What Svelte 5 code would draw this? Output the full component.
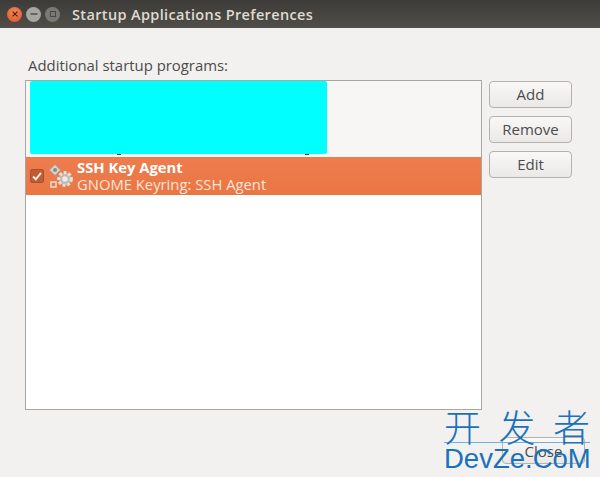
<script>
  let programs = [
    { name: 'SSH Key Agent', desc: 'GNOME Keyring: SSH Agent', checked: true }
  ];
  const actions = ['Add', 'Remove', 'Edit'];
</script>

<div class="window">
  <header class="titlebar">
    <div class="controls">
      <span class="ctl close">
        <svg width="14" height="14" viewBox="0 0 14 14"><path d="M4.6 4.6l4.8 4.8M9.4 4.6l-4.8 4.8" stroke="#5a1e08" stroke-width="1.3" /></svg>
      </span>
      <span class="ctl min">
        <svg width="14" height="14" viewBox="0 0 14 14"><path d="M3.5 7h7" stroke="#4a4844" stroke-width="1.4" /></svg>
      </span>
      <span class="ctl max">
        <svg width="14" height="14" viewBox="0 0 14 14"><rect x="4.5" y="4.5" width="5" height="5" fill="none" stroke="#4a4844" stroke-width="1" /></svg>
      </span>
    </div>
    <span class="title">Startup Applications Preferences</span>
  </header>

  <main class="content">
    <div class="label">Additional startup programs:</div>
    <div class="panel">
      <div class="list">
        <div class="hidden-row">
          <div class="redacted"></div>
          <!-- bits of descenders left under the cyan block -->
          <i class="tail a"></i>
          <i class="tail b"></i>
        </div>
        {#each programs as p}
          <div class="row">
            <span class="check">
              <svg width="12" height="12" viewBox="0 0 12 12"><path d="M2 6.5l2.8 2.8L10 2.8" fill="none" stroke="#fbeee6" stroke-width="2" /></svg>
            </span>
            <svg class="gears" width="28" height="28" viewBox="0 0 28 28">
              <path d="M7 2.5l5.5 5.5-5.5 5.5L1.500 8z" fill="#d9d4cf" stroke="#a8a09b" stroke-width="1" />
              <circle cx="7" cy="8" r="2" fill="#8f8a86" />
              <circle cx="17" cy="17" r="6.3" fill="#bdb8b4" stroke="#e9dfd9" stroke-width="3.2" stroke-dasharray="2.8 1.8" />
              <circle cx="17" cy="17" r="2.8" fill="#f0e9e4" />
              <rect x="3" y="20" width="5" height="5" fill="none" stroke="#e6dfda" stroke-width="1.500" />
            </svg>
            <div class="text">
              <strong>{p.name}</strong>
              <span>{p.desc}</span>
            </div>
          </div>
        {/each}
      </div>
      <div class="actions">
        {#each actions as a}
          <button>{a}</button>
        {/each}
      </div>
    </div>
    <div class="footer">
      <button class="close-btn">Close</button>
    </div>
  </main>

  <div class="watermark">
    <div class="cn"><span>开</span><span>发</span><span>者</span></div>
    <div class="en">DevZe.CoM</div>
  </div>
</div>

<style>
  :global(body) {
    margin: 0;
  }

  .window {
    position: relative;
    width: 600px;
    height: 477px;
    overflow: hidden;
    background: #f2f1f0;
    font-family: "Open Sans", "Noto Sans", sans-serif;
    color: #4c4c4c;
  }

  .titlebar {
    display: flex;
    align-items: center;
    height: 28px;
    padding-left: 7px;
    box-sizing: border-box;
    background: linear-gradient(#3c3b37, #504e49);
  }

  .controls {
    display: flex;
    gap: 4px;
    width: 65px;
  }

  .ctl {
    display: block;
    width: 15px;
    height: 15px;
    border-radius: 50%;
  }

  .ctl svg {
    display: block;
    margin: 0.5px;
  }

  .ctl.close {
    background: radial-gradient(circle at 50% 35%, #f08a5e, #df4f20);
  }

  .ctl.min {
    background: #a8a6a1;
  }

  .ctl.max {
    background: #7b7975;
  }

  .title {
    color: #dfdbd2;
    font-size: 14.5px;
    font-weight: 600;
    letter-spacing: 0.36px;
    white-space: nowrap;
  }

  .content {
    display: flex;
    flex-direction: column;
    height: 449px;
    box-sizing: border-box;
    padding: 27px 15px 13px 25px;
  }

  .label {
    height: 25px;
    margin-left: 3px;
    font-size: 14.9px;
    line-height: 20px;
    white-space: nowrap;
  }

  .panel {
    display: flex;
    gap: 7px;
    height: 331px;
    padding-right: 13px;
  }

  .list {
    flex: 1;
    box-sizing: border-box;
    border: 1px solid #a9a7a3;
    background: #fff;
  }

  .hidden-row {
    position: relative;
    height: 76px;
    padding: 0 4px;
    background: #f7f6f5;
  }

  .redacted {
    width: 297px;
    height: 73px;
    border-radius: 2px;
    background: #00ffff;
  }

  .tail {
    position: absolute;
    top: 73px;
    width: 4px;
    height: 1px;
    background: #2c4a52;
  }

  .tail.a {
    left: 91px;
  }

  .tail.b {
    left: 279px;
  }

  .row {
    display: flex;
    align-items: center;
    height: 38px;
    padding-left: 4px;
    background: linear-gradient(#ee7c4d, #ea7644);
    color: #fff;
  }

  .check {
    display: flex;
    align-items: center;
    justify-content: center;
    box-sizing: border-box;
    width: 14px;
    height: 14px;
    border: 1px solid #a9512d;
    border-radius: 2px;
    background: #c05c34;
  }

  .gears {
    margin-left: 4px;
    margin-right: 1px;
  }

  .text {
    display: flex;
    flex-direction: column;
    font-size: 14.8px;
    line-height: 16.5px;
    white-space: nowrap;
  }

  .text strong {
    font-weight: 700;
  }

  .text span {
    color: #fde4d8;
  }

  .actions {
    display: flex;
    flex-direction: column;
    gap: 8px;
    width: 83px;
    padding-top: 1px;
  }

  button {
    box-sizing: border-box;
    height: 27px;
    padding: 0;
    border: 1px solid #b5b2ac;
    border-radius: 4px;
    background: linear-gradient(#f9f8f7, #ebe9e7);
    color: #4c4c4c;
    font-family: inherit;
    font-size: 15px;
  }

  .footer {
    display: flex;
    justify-content: flex-end;
    margin-top: 27px;
  }

  .footer .close-btn {
    width: 83px;
  }

  .watermark {
    position: absolute;
    left: 444px;
    top: 407px;
    width: 146px;
    color: #1a72bd;
    font-family: "Noto Sans CJK SC", "Liberation Sans", sans-serif;
  }

  .cn {
    display: flex;
    justify-content: space-between;
    height: 35px;
    border-bottom: 1px solid #6fb0de;
    font-size: 37px;
    line-height: 39px;
    font-weight: 300;
  }

  .en {
    font-family: "Liberation Sans", sans-serif;
    font-size: 27.5px;
    line-height: 31px;
    white-space: nowrap;
  }
</style>
